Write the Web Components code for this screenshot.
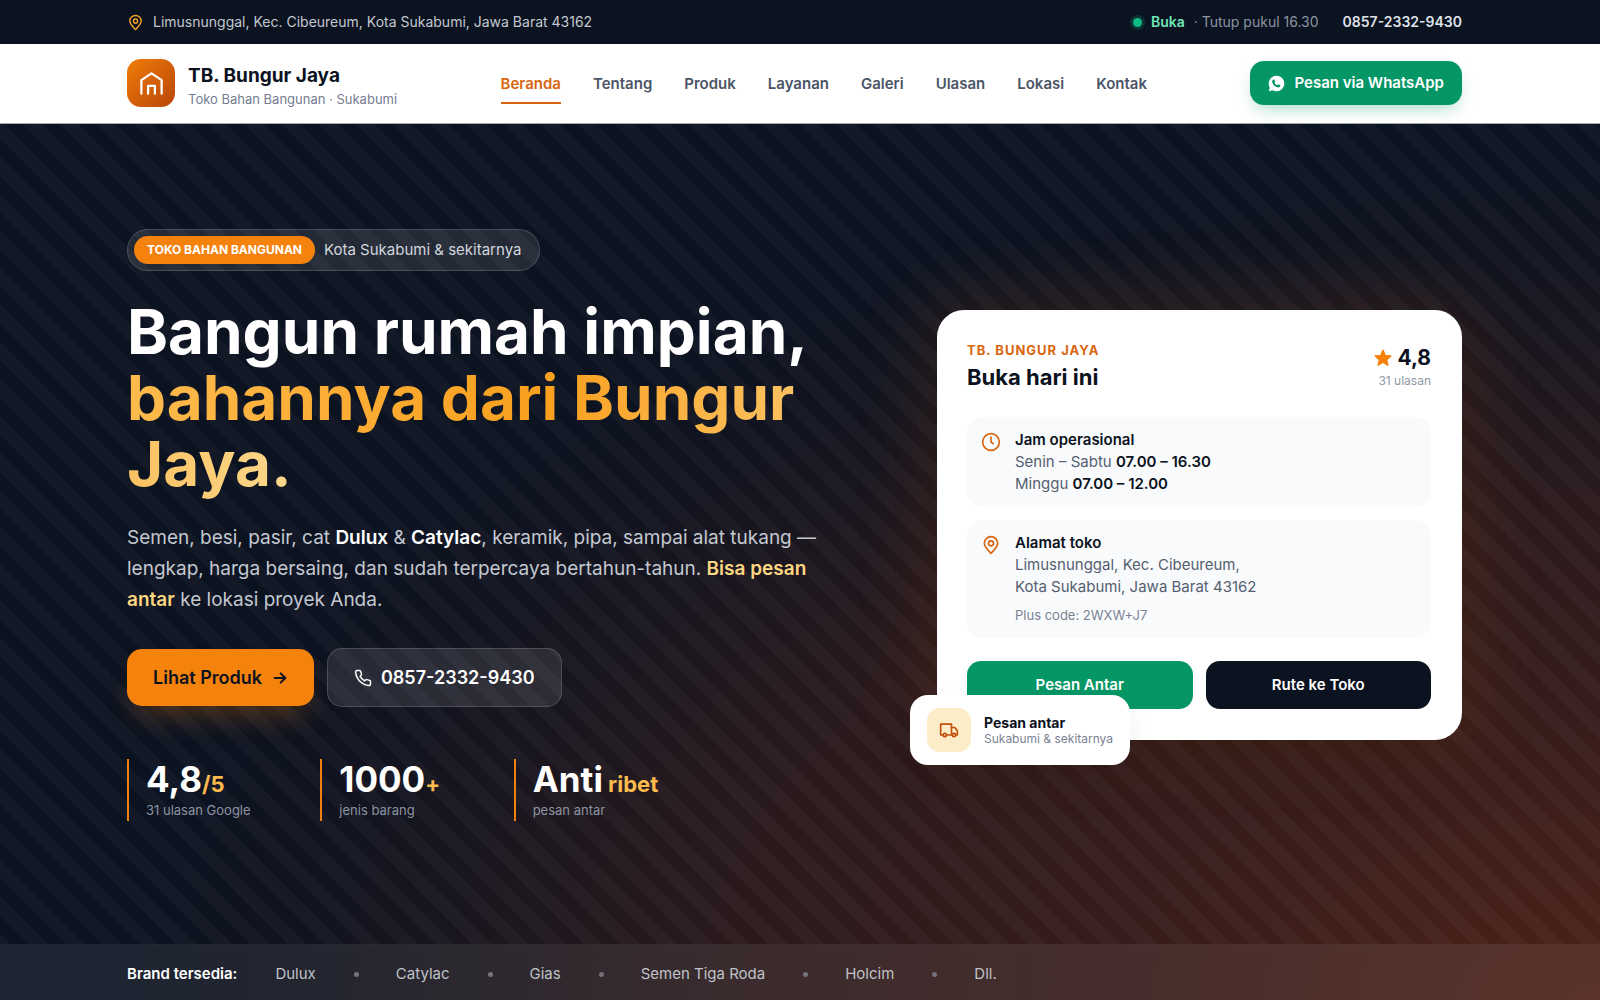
<!DOCTYPE html>
<html lang="id">
<head>
<meta charset="utf-8">
<title>TB. Bungur Jaya</title>
<style>
	html, body { height: 100%; }
	body {
		margin: 0;
		font-family: Inter, "Liberation Sans", sans-serif;
		color: #0b1220;
		background: #0b1220;
	}
</style>
</head>
<body>
<bj-page></bj-page>

<script>
(function() {
	// rules shared by every element
	const base = `
		<style>
			:host { display: block; box-sizing: border-box; }
			*, *::before, *::after { box-sizing: border-box; }
			a { color: inherit; text-decoration: none; }
			p, h1, h2, h3, ul { margin: 0; padding: 0; }
			ul { list-style: none; }
			svg { display: block; flex: none; }
		</style>
	`;

	function define(name, html) {
		const template = document.createElement("template");
		template.innerHTML = base + html;
		customElements.define(name, class extends HTMLElement {
			constructor() {
				super();
				this.attachShadow({ mode: "open" }).appendChild(template.content.cloneNode(true));
			}
		});
	}

	const icons = {
		pin: `<path d="M20 10c0 4.400-5.500 9.500-8 12-2.500-2.500-8-7.600-8-12a8 8 0 0 1 16 0z"/><circle cx="12" cy="10" r="3"/>`,
		clock: `<circle cx="12" cy="12" r="10"/><path d="M12 6v6l2.500 2"/>`,
		house: `<path d="M3 21V9l9-6 9 6v12"/><path d="M9 21v-7h6v7"/>`,
		arrow: `<path d="M4 12h16M13 5l7 7-7 7"/>`,
		phone: `<path d="M22 17v3a2 2 0 0 1-2.200 2C10.500 21 3 13.500 2.100 4.200A2 2 0 0 1 4.100 2h3a2 2 0 0 1 2 1.700c.1 1 .4 1.900.7 2.800a2 2 0 0 1-.5 2.100L8.100 9.900a16 16 0 0 0 6 6l1.300-1.300a2 2 0 0 1 2.100-.4c.9.3 1.800.5 2.800.7A2 2 0 0 1 22 17z"/>`,
		truck: `<path d="M5 18H2V5h13v13H9"/><path d="M15 9h4l3 4v5h-2"/><circle cx="7" cy="18" r="2"/><circle cx="18" cy="18" r="2"/>`,
		star: `<path fill="currentColor" d="M12 1.800l3 6.800 7.400.7-5.600 4.900 1.700 7.300L12 17.600l-6.500 3.900 1.700-7.300L1.600 9.300 9 8.600z"/>`,
		whatsapp: `<path fill="currentColor" stroke="none" fill-rule="evenodd" d="M12 1A11 11 0 0 0 2.600 17.700L1 23l5.500-1.500A11 11 0 1 0 12 1zM8.300 6.500c.3 0 .7 0 .9.5l.9 2.100c.1.300 0 .6-.2.900l-.8 1c.9 1.600 2.200 2.900 4 3.600l1-1.200c.2-.3.500-.4.800-.2l2.200 1.100c.4.200.4.400.4.900-.3 1.600-1.600 2.500-3.100 2.400-4.700-.6-7.900-3.900-8.500-7.700 0-1.500.7-3.200 2.400-3.400z"/>`
	};

	class BjIcon extends HTMLElement {
		constructor() {
			super();
			this.attachShadow({ mode: "open" });
		}

		connectedCallback() {
			const size = this.getAttribute("size") || 20;
			const width = this.getAttribute("stroke") || 2;
			this.shadowRoot.innerHTML = `
				<style>:host { display: block; flex: none; } svg { display: block; }</style>
				<svg width="${size}" height="${size}" viewBox="0 0 24 24" fill="none" stroke="currentColor"
					stroke-width="${width}" stroke-linecap="round" stroke-linejoin="round" aria-hidden="true">${icons[this.getAttribute("name")]}</svg>
			`;
		}
	}
	customElements.define("bj-icon", BjIcon);

	define("bj-wrap", `
		<style>
			:host { padding: 0 43px 0 32px; }
			div { max-width: 1335px; margin: 0 auto; }
		</style>
		<div><slot></slot></div>
	`);

	define("bj-topbar", `
		<style>
			:host { background: #0b1220; color: #c3c8d0; font-size: 14px; line-height: 20px; padding: 12px 0; }
			.row, .side { display: flex; align-items: center; }
			.row { justify-content: space-between; }
			.pin { color: #f9a52b; margin-right: 9px; }
			.dot { width: 9px; height: 9px; border-radius: 50%; background: #10b981; box-shadow: 0 0 0 3px rgba(16, 185, 129, .2); margin-right: 9px; }
			.open { color: #6ee7b7; font-weight: 600; margin-right: 9px; }
			.until { color: #8b94a3; margin-right: 24px; }
			.tel { font-weight: 600; color: #dfe3e9; }
		</style>
		<bj-wrap>
			<div class="row">
				<div class="side"><bj-icon class="pin" name="pin" size="17"></bj-icon><span>Limusnunggal, Kec. Cibeureum, Kota Sukabumi, Jawa Barat 43162</span></div>
				<div class="side">
					<span class="dot"></span><span class="open">Buka</span>
					<span class="until">· Tutup pukul 16.30</span>
					<a class="tel" href="tel:085723329430">0857-2332-9430</a>
				</div>
			</div>
		</bj-wrap>
	`);

	define("bj-header", `
		<style>
			:host { background: #fff; border-bottom: 1px solid #a5a9b0; padding: 12px 0 13px; }
			.row { display: flex; align-items: center; justify-content: space-between; }
			.brand { display: flex; align-items: center; gap: 13px; }
			.logo { display: grid; place-items: center; width: 48px; height: 48px; border-radius: 14px; color: #fff; background: linear-gradient(135deg, #f07d08, #b84508); }
			.words { padding-top: 8px; }
			.name { display: block; font-size: 19px; line-height: 24px; font-weight: 700; }
			.sub { display: block; font-size: 13px; line-height: 22px; color: #747d90; }
			nav { display: flex; gap: 32px; }
			nav a { font-size: 15px; line-height: 20px; font-weight: 600; color: #4b5567; padding: 11px 0 8px; border-bottom: 2px solid transparent; }
			nav a[aria-current] { color: #d9650f; border-color: #d9650f; }
			.wa { display: flex; align-items: center; gap: 9px; padding: 12px 18px; border-radius: 14px; background: #059666; color: #fff; font-size: 15px; line-height: 20px; font-weight: 600; box-shadow: 0 8px 18px -6px rgba(5, 150, 102, .4); }
		</style>
		<bj-wrap>
			<div class="row">
				<a class="brand" href="#beranda">
					<span class="logo"><bj-icon name="house" size="27"></bj-icon></span>
					<span class="words"><span class="name">TB. Bungur Jaya</span><span class="sub">Toko Bahan Bangunan · Sukabumi</span></span>
				</a>
				<nav>
					<a href="#beranda" aria-current="page">Beranda</a>
					<a href="#tentang">Tentang</a>
					<a href="#produk">Produk</a>
					<a href="#layanan">Layanan</a>
					<a href="#galeri">Galeri</a>
					<a href="#ulasan">Ulasan</a>
					<a href="#lokasi">Lokasi</a>
					<a href="#kontak">Kontak</a>
				</nav>
				<a class="wa" href="#pesan"><bj-icon name="whatsapp" size="17"></bj-icon>Pesan via WhatsApp</a>
			</div>
		</bj-wrap>
	`);

	define("bj-stat", `
		<style>
			:host { border-left: 2px solid #f0800f; padding-left: 17px; }
			.value { font-size: 35px; line-height: 41px; font-weight: 700; color: #fff; white-space: nowrap; }
			.unit { font-size: 22px; line-height: 22px; color: #fdba4d; }
			.label { font-size: 13px; line-height: 21px; color: #8b93a1; }
		</style>
		<p class="value"><slot></slot><span class="unit"><slot name="unit"></slot></span></p>
		<p class="label"><slot name="label"></slot></p>
	`);

	define("bj-intro", `
		<style>
			.pill { display: flex; width: fit-content; align-items: center; gap: 9px; padding: 6px 18px 6px 6px; border: 1px solid rgba(255, 255, 255, .16); border-radius: 21px; background: rgba(255, 255, 255, .1); color: #d2d6dd; font-size: 15px; line-height: 28px; }
			.tag { padding: 0 13px; border-radius: 14px; background: #f5820d; color: #fff; font-size: 12px; font-weight: 700; }
			h1 { margin-top: 28px; font-size: 62px; line-height: 66px; font-weight: 700; color: #fff; }
			h1 span { background: linear-gradient(90deg, #fdbb4d, #f99f1e 50%, #fcd88c); -webkit-background-clip: text; background-clip: text; color: transparent; }
			.lead { margin-top: 25px; max-width: 706px; font-size: 19px; line-height: 31px; color: #c3c8d0; }
			.lead b { font-weight: 600; color: #fff; }
			.lead .hot { color: #fdd682; }
			.actions { display: flex; align-items: center; gap: 13px; margin-top: 33px; }
			.btn { display: flex; align-items: center; border-radius: 15px; font-size: 18px; line-height: 25px; font-weight: 600; }
			.main { gap: 10px; padding: 16px 26px; background: #f5820d; color: #0b1220; box-shadow: 0 18px 30px -10px rgba(245, 130, 13, .3); }
			.call { gap: 9px; padding: 16px 26px; border: 1px solid rgba(255, 255, 255, .16); background: rgba(255, 255, 255, .1); color: #fff; }
			.stats { display: grid; grid-template-columns: repeat(3, 1fr); gap: 13px; max-width: 567px; margin-top: 52px; }
		</style>
		<div class="pill"><span class="tag">TOKO BAHAN BANGUNAN</span>Kota Sukabumi &amp; sekitarnya</div>
		<h1>Bangun rumah impian,<br><span>bahannya dari Bungur<br>Jaya.</span></h1>
		<p class="lead">Semen, besi, pasir, cat <b>Dulux</b> &amp; <b>Catylac</b>, keramik, pipa, sampai alat tukang —<br>lengkap, harga bersaing, dan sudah terpercaya bertahun-tahun. <b class="hot">Bisa pesan<br>antar</b> ke lokasi proyek Anda.</p>
		<div class="actions">
			<a class="btn main" href="#produk">Lihat Produk<bj-icon name="arrow" size="16" stroke="3"></bj-icon></a>
			<a class="btn call" href="tel:085723329430"><bj-icon name="phone" size="18"></bj-icon>0857-2332-9430</a>
		</div>
		<div class="stats">
			<bj-stat>4,8<span slot="unit">/5</span><span slot="label">31 ulasan Google</span></bj-stat>
			<bj-stat>1000<span slot="unit">+</span><span slot="label">jenis barang</span></bj-stat>
			<bj-stat>Anti<span slot="unit"> ribet</span><span slot="label">pesan antar</span></bj-stat>
		</div>
	`);

	define("bj-info", `
		<style>
			:host { display: flex; gap: 14px; padding: 12px 14px; border-radius: 16px; background: #f9fafc; font-size: 15px; line-height: 22px; color: #555f70; }
			.icon { color: #d9650f; padding-top: 3px; }
			h3 { font-size: 15px; line-height: 22px; font-weight: 600; color: #0b1220; }
		</style>
		<div class="icon"><slot name="icon"></slot></div>
		<div><h3><slot name="title"></slot></h3><slot></slot></div>
	`);

	define("bj-card", `
		<style>
			:host { position: relative; padding: 30px 31px 31px 30px; border-radius: 27px; background: #fff; box-shadow: 0 30px 60px -20px rgba(0, 0, 0, .25); }
			.head { display: flex; align-items: center; justify-content: space-between; margin-bottom: 22px; }
			.eyebrow { font-size: 13px; line-height: 20px; font-weight: 700; letter-spacing: 1px; color: #d9650f; }
			h2 { font-size: 22px; line-height: 35px; font-weight: 700; }
			.score { display: flex; align-items: center; justify-content: flex-end; gap: 5px; font-size: 21px; line-height: 26px; font-weight: 700; }
			.score bj-icon { color: #f5820d; }
			.count { font-size: 12px; line-height: 20px; color: #8f98a8; text-align: right; }
			.list { display: grid; gap: 13px; }
			b { font-weight: 600; color: #0b1220; }
			.code { display: block; margin-top: 6px; font-size: 13px; color: #7a8394; }
			.actions { display: grid; grid-template-columns: 1fr 1fr; gap: 13px; margin-top: 23px; }
			.actions a { padding: 12px; border-radius: 14px; background: #0b1220; color: #fff; font-size: 15px; line-height: 24px; font-weight: 600; text-align: center; }
			.actions .order { background: #059666; }
			/* hangs over the lower left corner */
			.float { position: absolute; left: -27px; bottom: -25px; display: flex; align-items: center; gap: 13px; padding: 13px 17px; border-radius: 18px; background: #fff; box-shadow: 0 10px 24px rgba(11, 18, 32, .06); }
			.truck { display: grid; place-items: center; width: 44px; height: 44px; border-radius: 13px; background: #fdecc8; color: #c2500c; }
			.float h3 { font-size: 14px; line-height: 17px; font-weight: 700; }
			.float p { font-size: 12px; line-height: 15px; color: #7a8394; }
		</style>
		<div class="head">
			<div><p class="eyebrow">TB. BUNGUR JAYA</p><h2>Buka hari ini</h2></div>
			<div><p class="score"><bj-icon name="star" size="18"></bj-icon>4,8</p><p class="count">31 ulasan</p></div>
		</div>
		<div class="list">
			<bj-info>
				<bj-icon slot="icon" name="clock" size="20"></bj-icon>
				<span slot="title">Jam operasional</span>
				Senin – Sabtu <b>07.00 – 16.30</b><br>Minggu <b>07.00 – 12.00</b>
			</bj-info>
			<bj-info>
				<bj-icon slot="icon" name="pin" size="20"></bj-icon>
				<span slot="title">Alamat toko</span>
				Limusnunggal, Kec. Cibeureum,<br>Kota Sukabumi, Jawa Barat 43162
				<span class="code">Plus code: 2WXW+J7</span>
			</bj-info>
		</div>
		<div class="actions"><a class="order" href="#pesan">Pesan Antar</a><a href="#rute">Rute ke Toko</a></div>
		<div class="float">
			<span class="truck"><bj-icon name="truck" size="20" stroke="2"></bj-icon></span>
			<div><h3>Pesan antar</h3><p>Sukabumi &amp; sekitarnya</p></div>
		</div>
	`);

	define("bj-brands", `
		<style>
			:host { padding: 17px 0 14px; border-top: 1px solid rgba(255, 255, 255, .02); background: rgba(255, 255, 255, .08); font-size: 15px; line-height: 24px; color: #bfc2c8; }
			.row { display: flex; align-items: center; gap: 38px; }
			b { font-weight: 600; color: #fff; }
			ul { display: flex; gap: 80px; }
			li { position: relative; }
			li + li::before { content: ""; position: absolute; left: -42px; top: 10px; width: 5px; height: 5px; border-radius: 50%; background: #74727a; }
		</style>
		<bj-wrap>
			<div class="row">
				<b>Brand tersedia:</b>
				<ul><li>Dulux</li><li>Catylac</li><li>Gias</li><li>Semen Tiga Roda</li><li>Holcim</li><li>Dll.</li></ul>
			</div>
		</bj-wrap>
	`);

	define("bj-page", `
		<style>
			:host { display: flex; flex-direction: column; min-height: 100vh; }
			main {
				flex: 1; display: flex; flex-direction: column;
				background:
					radial-gradient(ellipse 92% 96% at 100% 100%, rgba(124, 45, 18, .58), rgba(124, 45, 18, .4) 30%, rgba(124, 45, 18, .27) 60%, rgba(124, 45, 18, .07) 85%, transparent),
					#0b1220;
			}
			.hero {
				--stripe: rgba(255, 255, 255, .03);
				flex: 1;
				padding: 105px 0 100px;
				background: linear-gradient(45deg, var(--stripe) 25%, transparent 25% 50%, var(--stripe) 50% 75%, transparent 75%) 23px 0 / 37px 37px;
			}
			.cols { display: grid; grid-template-columns: minmax(0, 1fr) minmax(0, 525px); gap: 85px; align-items: center; }
			.glow { position: relative; }
			.glow::before { content: ""; position: absolute; inset: -16px; border-radius: 40px; background: rgba(217, 101, 15, .12); filter: blur(32px); }
		</style>
		<bj-topbar></bj-topbar>
		<bj-header></bj-header>
		<main>
			<div class="hero">
				<bj-wrap>
					<div class="cols">
						<bj-intro></bj-intro>
						<div class="glow"><bj-card></bj-card></div>
					</div>
				</bj-wrap>
			</div>
			<bj-brands></bj-brands>
		</main>
	`);
})();
</script>
</body>
</html>
